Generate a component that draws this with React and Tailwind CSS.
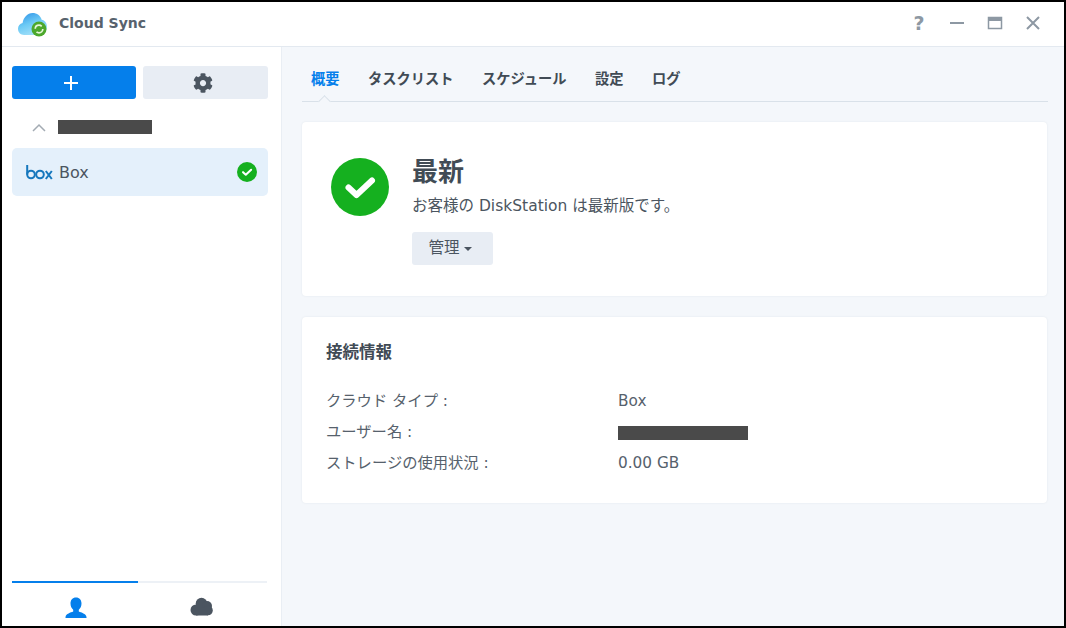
import { FaCog } from "react-icons/fa";

const font = { fontFamily: '"DejaVu Sans", "Noto Sans CJK JP", sans-serif' };

function AppLogo() {
  return (
    <svg width="30" height="28" viewBox="0 0 30 28">
      <defs>
        <linearGradient id="cl" x1="0.1" y1="0" x2="0.6" y2="1">
          <stop offset="0" stopColor="#2f93e8" />
          <stop offset="0.5" stopColor="#6ccaf5" />
          <stop offset="1" stopColor="#a8e2f9" />
        </linearGradient>
      </defs>
      <path d="M6 25c-3.500 0-6-2.800-6-6.200 0-3 2-5.300 4.600-5.800C5.500 7.500 9.500 3 14.500 3c4.500 0 8 2.700 9.200 6.800 3 .5 5.300 3.300 5.300 6.700 0 4.500-3 8.500-7 8.500z" fill="url(#cl)" />
      <circle cx="21" cy="19" r="7.500" fill="#4ca82c" />
      <circle cx="21" cy="19" r="3.800" fill="none" stroke="#e6f6da" strokeWidth="1.700" strokeDasharray="8.500 3.400" />
    </svg>
  );
}

function BoxLogo() {
  return (
    <svg width="27" height="15" viewBox="0 0 27 15" fill="none" stroke="#1577bd" strokeWidth="2">
      <path d="M1.200 0 V9.500" />
      <circle cx="5" cy="9.500" r="3.800" />
      <circle cx="14" cy="9.500" r="3.800" />
      <path d="M19.800 6 L25.800 14 M25.800 6 L19.800 14" />
    </svg>
  );
}

function CheckCircle({ size }) {
  return (
    <svg width={size} height={size} viewBox="0 0 58 58">
      <circle cx="29" cy="29" r="29" fill="#15b01f" />
      <path d="M17.500 29.500 L25.500 37 L41 22.500" fill="none" stroke="#fff" strokeWidth="6" strokeLinecap="round" strokeLinejoin="round" />
    </svg>
  );
}

function Redacted({ className }) {
  return <div className={"bg-[#4a4a4a] blur-[0.5px] " + className}></div>;
}

const tabs = ["概要", "タスクリスト", "スケジュール", "設定", "ログ"];

const rows = [
  ["クラウド タイプ :", "Box"],
  ["ユーザー名 :", null],
  ["ストレージの使用状況 :", "0.00 GB"],
];

export default function App() {
  return (
    <div style={font} className="w-[1066px] h-[628px] border-2 border-black bg-white flex flex-col overflow-hidden text-[#414b55]">
      {/* title bar */}
      <div className="h-[44px] shrink-0 flex items-center pl-[16px] pr-[22px] border-b border-[#e3e9f0] box-content">
        <AppLogo />
        <span className="ml-[11px] mb-[2px] text-[14px] font-bold text-[#57626d]">Cloud Sync</span>
        <div className="ml-auto mb-[2px] flex items-center gap-[20px] text-[#8d98a3]">
          <span className="text-[19px] leading-none w-[18px] text-center font-bold">?</span>
          <svg width="18" height="18" viewBox="0 0 18 18"><rect x="2" y="8" width="14" height="2" fill="#8d98a3" /></svg>
          <svg width="18" height="18" viewBox="0 0 18 18"><rect x="2.500" y="3.500" width="13" height="11" fill="none" stroke="#8d98a3" strokeWidth="1.500" /><rect x="2.500" y="3.500" width="13" height="3.500" fill="#8d98a3" /></svg>
          <svg width="18" height="18" viewBox="0 0 18 18"><path d="M3 3 L15 15 M15 3 L3 15" stroke="#8d98a3" strokeWidth="2" /></svg>
        </div>
      </div>

      <div className="flex-1 flex min-h-0">
        {/* sidebar */}
        <div className="w-[280px] shrink-0 flex flex-col border-r border-[#e9eef4] pl-[10px]">
          <div className="flex gap-[7px] mt-[19px]">
            <button className="w-[124px] h-[33px] rounded-[3px] bg-[#057feb] flex items-center justify-center pr-[6px]">
              <svg width="16" height="16" viewBox="0 0 16 16"><path d="M8 1 V15 M1 8 H15" stroke="#fff" strokeWidth="2" /></svg>
            </button>
            <button className="w-[125px] h-[33px] rounded-[3px] bg-[#e8edf4] flex items-center justify-center pr-[5px]">
              <FaCog className="text-[#4b5560] text-[20px]" />
            </button>
          </div>
          <div className="flex items-center h-[28px] mt-[14px] pl-[20px]">
            <svg width="14" height="9" viewBox="0 0 14 9"><path d="M1 8 L7 2 L13 8" fill="none" stroke="#a3abb3" strokeWidth="1.500" /></svg>
            <Redacted className="ml-[12px] w-[94px] h-[14px]" />
          </div>
          <div className="mt-[7px] h-[48px] w-[256px] rounded-[5px] bg-[#e4f0fb] flex items-center pl-[14px] pr-[11px]">
            <BoxLogo />
            <span className="ml-[6px] mt-[1px] text-[16px] text-[#4b5560]">Box</span>
            <div className="ml-auto"><CheckCircle size={20} /></div>
          </div>
          <div className="mt-auto flex flex-col">
            <div className="flex h-[2px] w-[255px] bg-[#edf1f6]">
              <div className="w-[126px] bg-[#057feb]"></div>
            </div>
            <div className="flex h-[43px] w-[255px]">
              <div className="w-[128px] flex items-center justify-center pt-[6px]">
                <svg width="24" height="24" viewBox="0 0 24 24"><path d="M12 1.500c3.500 0 5.500 2.600 5.500 6 0 2.800-1.200 5-2.700 6.200v1.800c2.500 1.200 7.200 2 7.700 5.500v1H1.500v-1c.5-3.500 5.200-4.300 7.700-5.500v-1.800C7.700 12.500 6.500 10.300 6.500 7.500c0-3.400 2-6 5.500-6z" fill="#057feb" /></svg>
              </div>
              <div className="flex-1 flex items-center justify-center pt-[4px] pr-[4px]">
                <svg width="24" height="20" viewBox="0 0 24 20" fill="#4b5560">
                  <circle cx="6" cy="13" r="5.500" />
                  <circle cx="11.500" cy="6.500" r="5.800" />
                  <circle cx="17" cy="9" r="5" />
                  <circle cx="18" cy="13.500" r="4.800" />
                  <rect x="6" y="11" width="12" height="7.500" />
                </svg>
              </div>
            </div>
          </div>
        </div>

        {/* main */}
        <div className="flex-1 bg-[#f4f7fb] pl-[20px] pr-[16px] flex flex-col">
          <div className="relative flex h-[55px] border-b border-[#d9e1e9] pl-[9px] gap-[28.500px] items-center font-bold text-[14.250px] pt-[12px]">
            {tabs.map((t, i) => (
              <span key={t} className={i === 0 ? "text-[#057feb]" : "text-[#414b55]"}>{t}</span>
            ))}
            <div className="absolute left-[18px] bottom-[-5px] w-[9px] h-[9px] rotate-45 bg-[#f4f7fb] border-l border-t border-[#d9e1e9]"></div>
          </div>

          <div className="mt-[20px] mr-[1px] h-[174px] bg-white rounded-[4px] shadow-[0_0_2px_rgba(90,110,130,0.12)] flex pl-[29px] pt-[36px]">
            <CheckCircle size={58} />
            <div className="ml-[23px] flex flex-col items-start">
              <div className="text-[26px] leading-[28px] font-bold text-[#414b55]">最新</div>
              <div className="mt-[10px] text-[15.500px] leading-[20px] text-[#4b5560]">お客様の DiskStation は最新版です。</div>
              <button className="mt-[16px] w-[81px] h-[33px] rounded-[3px] bg-[#e8edf4] flex items-center justify-center gap-[4px] pr-[5px] text-[15.500px] text-[#4b5560]">
                管理
                <svg width="8" height="4" viewBox="0 0 8 4"><path d="M0 0 H8 L4 4 z" fill="#4b5560" /></svg>
              </button>
            </div>
          </div>

          <div className="mt-[21px] mr-[1px] h-[186px] bg-white rounded-[4px] shadow-[0_0_2px_rgba(90,110,130,0.12)] pl-[24px] pt-[24px]">
            <div className="text-[16.500px] leading-[24px] font-bold text-[#414b55]">接続情報</div>
            <div className="mt-[21px] flex flex-col">
              {rows.map(([label, value]) => (
                <div key={label} className="flex items-center h-[31px] text-[15.300px] text-[#56616c]">
                  <span className="w-[292px]">{label}</span>
                  {value ? <span>{value}</span> : <Redacted className="w-[130px] h-[14px]" />}
                </div>
              ))}
            </div>
          </div>
        </div>
      </div>
    </div>
  );
}
